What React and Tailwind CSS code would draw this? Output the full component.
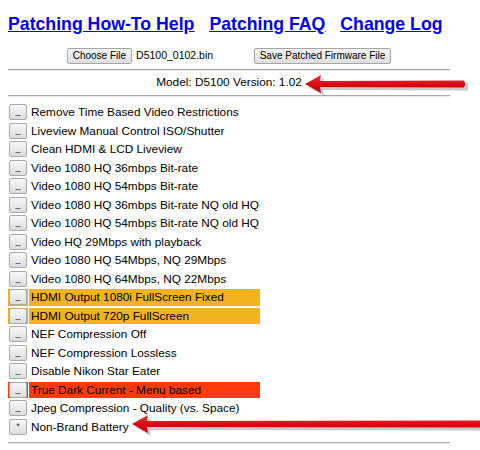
import React from 'react';

const patches = [
  { label: 'Remove Time Based Video Restrictions' },
  { label: 'Liveview Manual Control ISO/Shutter' },
  { label: 'Clean HDMI & LCD Liveview' },
  { label: 'Video 1080 HQ 36mbps Bit-rate' },
  { label: 'Video 1080 HQ 54mbps Bit-rate' },
  { label: 'Video 1080 HQ 36mbps Bit-rate NQ old HQ' },
  { label: 'Video 1080 HQ 54mbps Bit-rate NQ old HQ' },
  { label: 'Video HQ 29Mbps with playback' },
  { label: 'Video 1080 HQ 54Mbps, NQ 29Mbps' },
  { label: 'Video 1080 HQ 64Mbps, NQ 22Mbps' },
  { label: 'HDMI Output 1080i FullScreen Fixed', tone: 'warn' },
  { label: 'HDMI Output 720p FullScreen', tone: 'warn' },
  { label: 'NEF Compression Off' },
  { label: 'NEF Compression Lossless' },
  { label: 'Disable Nikon Star Eater' },
  { label: 'True Dark Current - Menu based', tone: 'danger' },
  { label: 'Jpeg Compression - Quality (vs. Space)' },
  { label: 'Non-Brand Battery', mark: '*' },
];

const toneBg = {
  warn: 'bg-[#f2b31e]',
  danger: 'bg-[#ff3b0c]',
};

const RedArrow = ({ className, length }) => (
  <svg className={className} width={length + 4} height="24" viewBox={`0 0 ${length + 4} 24`}>
    <defs>
      <linearGradient id="arrowRed" x1="0" y1="0" x2="0" y2="1">
        <stop offset="0" stopColor="#f2333a" />
        <stop offset="0.5" stopColor="#dd0b12" />
        <stop offset="1" stopColor="#a8060c" />
      </linearGradient>
    </defs>
    <path
      d={`M2 12 L18 3 L17 9 L${length} 8.5 L${length} 15.5 L17 15 L18 21 Z`}
      fill="#8a8a8a"
      opacity="0.45"
      transform="translate(2 2)"
    />
    <path
      d={`M1 11 L17 2 L16 8 L${length - 2} 7.5 Q${length} 11 ${length - 2} 14.5 L16 14 L17 20 Z`}
      fill="url(#arrowRed)"
    />
  </svg>
);

const OldButton = ({ children, className = '' }) => (
  <button
    className={`h-[16px] px-[5px] text-[10px] leading-[14px] text-black border border-[#a6a6a6] rounded-[2px] bg-gradient-to-b from-[#f6f6f6] to-[#dedede] ${className}`}
  >
    {children}
  </button>
);

const Rule = ({ className = '' }) => (
  <div className={`h-[2px] border-t border-[#a9a9a9] bg-[#e9e9e9] ${className}`} />
);

function App() {
  return (
    <div className="relative w-[480px] h-[450px] overflow-hidden bg-white text-black font-['Liberation_Sans',Arial,sans-serif]">
      <div className="ml-[8px] w-[442px] pt-[14px]">
        <div className="flex gap-[15px] h-[20px] text-[17.7px] leading-[20px] font-bold text-[#0000ee] underline whitespace-nowrap">
          <a href="#help">Patching How-To Help</a>
          <a href="#faq">Patching FAQ</a>
          <a href="#log">Change Log</a>
        </div>

        <div className="mt-[14px] h-[16px] flex justify-center items-center">
          <div className="w-[187px] flex items-center gap-[4px]">
            <OldButton>Choose File</OldButton>
            <span className="text-[10.5px]">D5100_0102.bin</span>
          </div>
          <OldButton>Save Patched Firmware File</OldButton>
        </div>

        <Rule className="mt-[5px]" />

        <div className="mt-[4px] h-[14px] text-center text-[11.8px] leading-[14px]">
          Model: D5100 Version: 1.02
        </div>

        <Rule className="mt-[6px]" />

        <div className="mt-[7px] flex flex-col gap-[2px] w-fit">
          {patches.map((p) => (
            <div key={p.label} className="flex gap-[1px] h-[16.5px]">
              <div className={`w-[20px] flex items-center pl-[1px] ${toneBg[p.tone] || ''}`}>
                <div className="w-[18px] h-[16px] border border-[#a9a9a9] rounded-[2px] bg-gradient-to-b from-[#f7f7f7] to-[#dcdcdc] text-[9px] leading-[12px] text-center text-[#333]">
                  {p.mark || '_'}
                </div>
              </div>
              <div className={`w-[231px] pl-[2px] text-[11.8px] leading-[16.5px] whitespace-nowrap ${toneBg[p.tone] || ''}`}>
                {p.label}
              </div>
            </div>
          ))}
        </div>

        <Rule className="mt-[7px]" />
      </div>

      <RedArrow className="absolute left-[304px] top-[73px]" length={162} />
      <RedArrow className="absolute left-[131px] top-[413px]" length={352} />
    </div>
  );
}

export default App;
